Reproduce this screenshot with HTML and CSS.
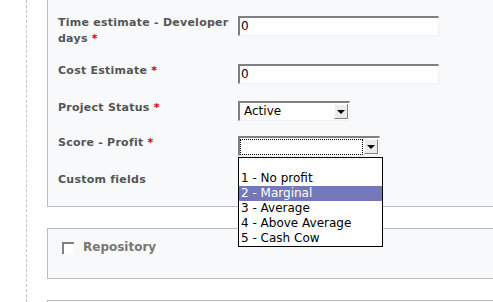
FILE: index.html
```html
<!DOCTYPE html>
<html lang="en">
<head>
    <meta charset="UTF-8">
    <title>Project details</title>
    <link rel="stylesheet" href="styles.css">
</head>
<body>

<div class="page">

    <!-- project fields -->
    <div class="panel panel-open">
        <div class="row">
            <label><span class="line">Time estimate - Developer</span><span class="line">days <span class="req">*</span></span></label>
            <div class="field"><div class="text-input">0</div></div>
        </div>
        <div class="row">
            <label>Cost Estimate <span class="req">*</span></label>
            <div class="field"><div class="text-input">0</div></div>
        </div>
        <div class="row tight">
            <label>Project Status <span class="req">*</span></label>
            <div class="field">
                <div class="select select-status">
                    <span class="select-value">Active</span>
                    <span class="select-btn"><span class="arrow"></span></span>
                </div>
            </div>
        </div>
        <div class="row">
            <label>Score - Profit <span class="req">*</span></label>
            <div class="field">
                <div class="select select-score">
                    <span class="select-value focus"></span>
                    <span class="select-btn"><span class="arrow"></span></span>
                </div>
                <ul class="options">
                    <li class="empty"></li>
                    <li>1 - No profit</li>
                    <li class="selected">2 - Marginal</li>
                    <li>3 - Average</li>
                    <li>4 - Above Average</li>
                    <li>5 - Cash Cow</li>
                </ul>
            </div>
        </div>
        <div class="row last">
            <label>Custom fields</label>
        </div>
    </div>

    <!-- repository -->
    <div class="panel panel-closed">
        <div class="legend">
            <span class="checkbox"></span>
            <span>Repository</span>
        </div>
    </div>

    <div class="panel panel-closed"></div>

</div>

</body>
</html>
```

FILE: styles.css
```css
body {
    margin: 0;
    padding: 0;
    background-color: #fff;
    font-family: "DejaVu Sans", sans-serif;
    overflow: hidden;
}
.page {
    margin-left: 26px;
    border-left: 1px dashed #c4c4c4;
    height: 302px;
    overflow: hidden;
}
.panel {
    margin-left: 20px;
    width: 600px;
    background-color: #f8f9fb;
    border: 1px solid #bdbdbd;
}
.panel-open {
    border-top: none;
    padding: 15px 0 18px 10px;
}
.panel-closed {
    margin-top: 21px;
    height: 49px;
}
.row {
    display: flex;
    align-items: flex-start;
    margin-bottom: 16px;
}
.row.tight {
    margin-bottom: 14px;
}
.row.last {
    margin-bottom: 0;
}
.row label {
    width: 180px;
    font-size: 11px;
    font-weight: bold;
    line-height: 16px;
    color: #555;
    letter-spacing: 0.25px;
}
.row label .line {
    display: block;
}
.req {
    color: #cc0000;
}
.field {
    position: relative;
    margin-top: 1px;
}
.text-input {
    width: 197px;
    height: 17px;
    background-color: #fff;
    border-top: 2px solid #808080;
    border-left: 2px solid #808080;
    border-right: 1px solid #f0f0f0;
    border-bottom: 1px solid #f0f0f0;
    font-size: 12px;
    line-height: 17px;
    padding-left: 1px;
    color: #000;
}
.select {
    display: flex;
    height: 17px;
    background-color: #fff;
    border-top: 2px solid #808080;
    border-left: 2px solid #808080;
    border-right: 1px solid #f0f0f0;
    border-bottom: 1px solid #f0f0f0;
}
.select-status {
    width: 109px;
}
.select-score {
    width: 139px;
}
.select-value {
    flex: 1;
    font-size: 12px;
    line-height: 17px;
    padding-left: 4px;
    color: #000;
}
.select-value.focus {
    border: 1px dotted #000;
    margin: 1px 1px 0 0;
    height: 14px;
}
.select-btn {
    width: 12px;
    height: 13px;
    margin: 1px 1px 0 0;
    background-color: #ececec;
    border-top: 1px solid #fff;
    border-left: 1px solid #fff;
    border-right: 1px solid #808080;
    border-bottom: 1px solid #808080;
    display: flex;
    align-items: center;
    justify-content: center;
}
.arrow {
    width: 0;
    height: 0;
    border-left: 4px solid transparent;
    border-right: 4px solid transparent;
    border-top: 4px solid #000;
}
.options {
    position: absolute;
    top: 21px;
    left: 0;
    width: 143px;
    margin: 0;
    padding: 0;
    list-style: none;
    background-color: #fff;
    border: 1px solid #000;
    z-index: 2;
}
.options li {
    height: 15px;
    font-size: 12px;
    line-height: 15px;
    padding-left: 2px;
    color: #000;
    white-space: nowrap;
}
.options li.empty {
    height: 13px;
}
.options li.selected {
    background-color: #7477b8;
    color: #fff;
}
.legend {
    display: flex;
    align-items: center;
    margin: 11px 0 0 14px;
    font-size: 12px;
    font-weight: bold;
    color: #777;
}
.checkbox {
    width: 10px;
    height: 10px;
    margin-right: 9px;
    margin-top: 2px;
    background-color: #fff;
    border-top: 2px solid #808080;
    border-left: 2px solid #808080;
}
```
